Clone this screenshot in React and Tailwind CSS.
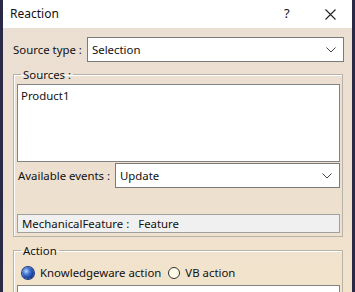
import React from "react";

const font = { fontFamily: '"Segoe UI", "Noto Sans", "Liberation Sans", sans-serif' };

const Chevron = () => (
  <svg width="10" height="6" viewBox="0 0 10 6" className="text-[#444]">
    <path d="M0.5 0.5 L5 5 L9.5 0.5" fill="none" stroke="currentColor" strokeWidth="1" />
  </svg>
);

const Combo = ({ value, className }) => (
  <div className={`flex items-center justify-between bg-white border border-[#7a7a7a] h-[25px] pl-[4px] pr-[7px] ${className}`}>
    <span>{value}</span>
    <Chevron />
  </div>
);

const Radio = ({ checked }) =>
  checked ? (
    <span className="block shrink-0 w-[12px] h-[12px] rounded-full bg-[radial-gradient(circle_at_35%_35%,#b8d4ff_0%,#3a6fd0_35%,#0b2a7a_80%)] shadow-[0_0_0_1px_#1b3a80]" />
  ) : (
    <span className="block shrink-0 w-[12px] h-[12px] rounded-full bg-[#fffbe8] border border-[#333]" />
  );

export default function App() {
  return (
    <div
      className="w-[355px] h-[292px] overflow-hidden flex flex-col border-l-[3px] border-r-[3px] border-[#2b2a46] text-[11.4px] text-[#111]"
      style={font}
    >
      <div className="h-[28px] shrink-0 bg-white flex items-center pl-[7px] text-[12px]">
        <span className="flex-1">Reaction</span>
        <span className="w-[8px] text-[13px]">?</span>
        <svg width="11" height="11" viewBox="0 0 11 11" className="ml-[33px] mr-[16px] text-[#222]">
          <path d="M0.5 0.5 L10.5 10.5 M10.5 0.5 L0.5 10.5" stroke="currentColor" strokeWidth="1.1" fill="none" />
        </svg>
      </div>
      <div className="flex-1 bg-[linear-gradient(180deg,#ebdfd3_0%,#ede0cf_60%,#f4e5ca_100%)] pl-[10px] pr-[8px] pt-[9px]">
        <div className="flex items-center h-[25px]">
          <span className="w-[74px]">Source type :</span>
          <Combo value="Selection" className="flex-1" />
        </div>
        <fieldset className="mt-[5px] mr-[1px] border border-[#b9b2a8] shadow-[inset_1px_1px_0_#fff] pt-[2px] pl-[3px] pr-[2px] pb-[3px]">
          <legend className="ml-[4px] px-[2px] leading-[15px]">Sources :</legend>
          <div className="h-[78px] bg-white border border-[#828282] pl-[3px] pt-[2px]">Product1</div>
          <div className="flex items-center h-[25px] mt-[1px]">
            <span className="w-[98px] pl-[1px]">Available events :</span>
            <Combo value="Update" className="flex-1" />
          </div>
          <div className="mt-[26px] h-[19px] bg-[#f0f0f0] border border-[#a0a0a0] flex items-center pl-[4px]">
            <span>MechanicalFeature :</span>
            <span className="ml-[9px]">Feature</span>
          </div>
        </fieldset>
        <fieldset className="mt-[6px] mr-[1px] border border-[#b9b2a8] shadow-[inset_1px_1px_0_#fff] pl-[3px] pr-[2px] pt-[7px]">
          <legend className="ml-[4px] px-[2px] leading-[15px]">Action</legend>
          <div className="flex items-center h-[16px] pl-[5px]">
            <Radio checked />
            <span className="ml-[6px]">Knowledgeware action</span>
            <span className="ml-[7px]"><Radio /></span>
            <span className="ml-[5px]">VB action</span>
          </div>
          <div className="mt-[4px] h-[30px] bg-white border border-[#828282] pl-[4px] pt-[1px]">Pad.2 -&gt; Pad.1</div>
        </fieldset>
      </div>
    </div>
  );
}
